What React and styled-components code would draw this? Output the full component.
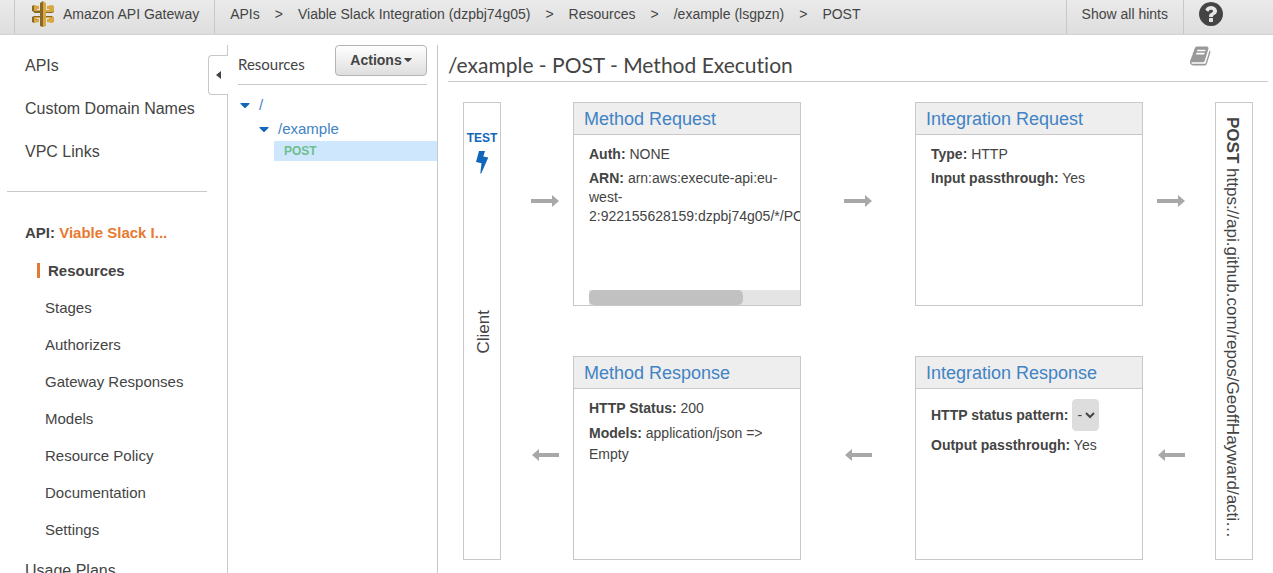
import React from 'react';
import styled, { createGlobalStyle } from 'styled-components';

const GlobalStyle = createGlobalStyle`
  * {
    box-sizing: border-box;
  }
  body {
    margin: 0;
    background: #fff;
    color: #444;
    font-family: 'Liberation Sans', Arial, sans-serif;
    font-size: 14px;
    line-height: 20px;
  }
  a {
    color: inherit;
    text-decoration: none;
  }
  h1, h2, ul, p {
    margin: 0;
    padding: 0;
  }
  ul {
    list-style: none;
  }
`;

const PageStyles = styled.div`
  height: 100vh;
  overflow: hidden;
  display: flex;
  flex-direction: column;
`;

const HeaderStyles = styled.header`
  flex: none;
  display: flex;
  height: 35px;
  padding-left: 14px;
  background: linear-gradient(#eaeaea, #dedede);
  border-bottom: 1px solid #d2d2d2;
`;

const HeaderCell = styled.div`
  display: flex;
  align-items: center;
  gap: ${({ $gap }) => $gap || 0}px;
  padding: 0 15px 6px;
  border-left: 1px solid #c8c8c8;
  flex: ${({ $grow }) => ($grow ? 1 : 'none')};
`;

const Brand = styled.a`
  display: flex;
  align-items: center;
  gap: 8px;
`;

const PlainButton = styled.button`
  display: flex;
  align-items: center;
  padding: 0;
  border: 0;
  background: none;
  color: ${({ $color }) => $color || '#444'};
  font: inherit;
  cursor: pointer;
`;

const HelpCell = styled(HeaderCell)`
  width: 90px;
  padding-left: 13px;
`;

const BodyStyles = styled.div`
  flex: 1;
  min-height: 0;
  display: flex;
  padding-top: 10px;
`;

const SidebarStyles = styled.nav`
  position: relative;
  flex: none;
  width: 228px;
  border-right: 1px solid #c8c8c8;
  padding: 11px 20px 0 7px;
`;

const MainLinks = styled.ul`
  display: flex;
  flex-direction: column;
  gap: 23px;
  padding: 0 0 29px 18px;
  border-bottom: 1px solid #c8c8c8;
  font-size: 16px;
`;

const ApiName = styled.p`
  padding: 31px 0 17px 18px;
  font-size: 15px;
  font-weight: bold;
  a {
    color: #e77a30;
  }
`;

const SubLinks = styled.ul`
  display: flex;
  flex-direction: column;
  gap: 17px;
  padding-left: 30px;
  font-size: 15px;
`;

const SubLink = styled.a`
  display: block;
  margin: 3px 0 2px;
  line-height: 15px;
  border-left: 3px solid ${({ $active }) => ($active ? '#e07b35' : 'transparent')};
  padding-left: ${({ $active }) => ($active ? 8 : 5)}px;
  font-weight: ${({ $active }) => ($active ? 'bold' : 'normal')};
`;

const PlansLink = styled.a`
  display: block;
  padding: 22px 0 0 18px;
  font-size: 16px;
`;

const CollapseButton = styled.button`
  position: absolute;
  top: 10px;
  right: -1px;
  width: 20px;
  height: 40px;
  padding: 0;
  display: flex;
  align-items: center;
  justify-content: center;
  background: #fff;
  border: 1px solid #c8c8c8;
  border-right: 0;
  border-radius: 4px 0 0 4px;
  color: #444;
`;

const ResourcesStyles = styled.section`
  flex: none;
  width: 210px;
  padding-left: 10px;
  border-right: 1px solid #c8c8c8;
`;

const ResourcesHead = styled.div`
  display: flex;
  justify-content: space-between;
  align-items: flex-start;
  height: 40px;
  margin-right: 10px;
  border-bottom: 1px solid #c8c8c8;
  h2 {
    padding-top: 9px;
    font-family: Lato, sans-serif;
    font-size: 15px;
    font-weight: normal;
  }
`;

const ActionsButton = styled.button`
  display: flex;
  align-items: center;
  justify-content: center;
  gap: 2px;
  width: 92px;
  height: 31px;
  padding: 0 0 2px;
  background: linear-gradient(#fff, #dedede);
  border: 1px solid #b4b4b4;
  border-radius: 4px;
  color: #444;
  font: bold 14px 'Liberation Sans', Arial, sans-serif;
`;

const Tree = styled.ul`
  padding-top: 8px;
  font-size: 15px;
`;

const TreeRow = styled.a`
  display: flex;
  align-items: center;
  gap: 9px;
  height: 24px;
  padding-left: ${({ $depth }) => $depth * 19 + 2}px;
  color: #4183c4;
`;

const MethodRow = styled.a`
  display: block;
  margin-left: 36px;
  padding-left: 10px;
  background: #cfe7fd;
  color: #6cc08b;
  font-size: 12px;
  font-weight: bold;
`;

const MainStyles = styled.main`
  flex: 1;
  min-width: 0;
  padding: 0 5px 0 10px;
`;

const TitleBar = styled.div`
  display: flex;
  justify-content: space-between;
  align-items: flex-start;
  height: 37px;
  padding-right: 56px;
  border-bottom: 1px solid #c8c8c8;
  h1 {
    padding-top: 7px;
    font-family: Lato, sans-serif;
    font-size: 21px;
    line-height: 26px;
    font-weight: normal;
    font-variant-ligatures: none;
  }
`;

const Flow = styled.div`
  display: grid;
  grid-template-columns: 38px 72px 2fr 1fr 2fr 72px 38px;
  grid-template-rows: 204px 204px;
  row-gap: 50px;
  padding: 20px 15px 0;
`;

const EndBox = styled.div`
  grid-row: 1 / span 2;
  grid-column: ${({ $column }) => $column};
  display: flex;
  flex-direction: column;
  align-items: center;
  border: 1px solid #c8c8c8;
  font-size: 17px;
`;

const TestLink = styled.a`
  display: flex;
  flex-direction: column;
  align-items: center;
  gap: 3px;
  padding-top: 25px;
  color: #1166bb;
  font-size: 12px;
  font-weight: bold;
`;

const ClientLabel = styled.span`
  margin-top: 136px;
  padding-right: 4px;
  writing-mode: vertical-rl;
  transform: rotate(180deg);
`;

const EndpointLabel = styled.span`
  padding-top: 14px;
  padding-right: 4px;
  writing-mode: vertical-rl;
  white-space: nowrap;
`;

const ArrowCell = styled.div`
  display: flex;
  align-items: center;
  justify-content: ${({ $align }) => $align || 'center'};
  grid-column: ${({ $column }) => $column};
  grid-row: ${({ $row }) => $row};
  padding: 0 14px 6px;
`;

const CardStyles = styled.section`
  grid-column: ${({ $column }) => $column};
  grid-row: ${({ $row }) => $row};
  min-width: 0;
  display: flex;
  flex-direction: column;
  border: 1px solid #c8c8c8;
  h2 {
    height: 32px;
    padding: 0 10px;
    background: #eee;
    border-bottom: 1px solid #c8c8c8;
    color: #4183c4;
    font-size: 18px;
    line-height: 33px;
    font-weight: normal;
  }
`;

const CardBody = styled.div`
  flex: 1;
  display: flex;
  flex-direction: column;
  gap: 5px;
  padding: 10px 0 0 15px;
  overflow: hidden;
  line-height: 19px;
`;

const Models = styled.p`
  padding-right: 15px;
  line-height: 21px;
`;

const ScrollTrack = styled.div`
  flex: none;
  height: 15px;
  margin-top: auto;
  background: #e4e4e4;
`;

const ScrollThumb = styled.div`
  width: 73%;
  height: 15px;
  border-radius: 5px;
  background: #c1c1c1;
`;

const PatternRow = styled.p`
  display: flex;
  align-items: center;
  gap: 4px;
`;

const PatternSelect = styled.select`
  height: 32px;
  padding: 0;
  border: 1px solid #ddd;
  border-radius: 4px;
  background-color: #ddd;
  color: #444;
  font: inherit;
`;

function GatewayLogo() {
  return (
    <svg width='25' height='28' viewBox='-1 0 25 28' aria-hidden='true'>
      <path fill='#876929' d='M1 6l2-1v7l-2-1zM1 17l2-1v7l-2-1zM9 3l3-2v26l-3-1z' />
      <path fill='#d9a741' d='M12 1l3 2v23l-3 1zM3 5l5 1v3H6v1h3v2H3zM3 16h6v2H6v1h2v3l-5 1z' />
      <path fill='#d9a741' d='M16 6l5-1 2 1v5l-2 1h-6v-2h3V9h-2zM15 16h6l2 1v5l-2 1-5-1v-3h2v-1h-3z' />
      <path fill='#876929' d='M3 11h6v2H3zM3 16h6v1H3zM15 12h6l2-1v1l-2 1h-6zM15 16h6v1h-6z' />
    </svg>
  );
}

function HelpIcon() {
  return (
    <svg width='28' height='28' viewBox='0 0 1792 1792' fill='currentColor' aria-hidden='true'>
      <path d='M1024 1376v-192q0-14-9-23t-23-9h-192q-14 0-23 9t-9 23v192q0 14 9 23t23 9h192q14 0 23-9t9-23zm256-672q0-88-55.500-163t-138.500-116-170-41q-243 0-371 213-15 24 8 42l132 100q7 6 19 6 16 0 25-12 53-68 86-92 34-24 86-24 48 0 85.500 26t37.500 59q0 38-20 61t-68 45q-63 28-115.500 86.500t-52.500 125.500v36q0 14 9 23t23 9h192q14 0 23-9t9-23q0-19 21.500-49.500t54.500-49.500q32-18 49-28.500t46-35 44.500-48 28-60.500 12.500-81zm384 192q0 209-103 385.500t-279.500 279.500-385.500 103-385.500-103-279.500-279.500-103-385.500 103-385.500 279.500-279.500 385.500-103 385.500 103 279.500 279.500 103 385.500z' />
    </svg>
  );
}

function BookIcon() {
  return (
    <svg width='22' height='22' viewBox='0 0 1792 1792' fill='currentColor' aria-hidden='true'>
      <path d='M1639 478q40 57 18 129l-275 906q-19 64-76.500 107.500t-122.500 43.500h-923q-77 0-148.500-53.500t-99.500-131.500q-24-67-2-127 0-4 3-27t4-37q1-8-3-21.500t-3-19.500q2-11 8-21t16.500-23.500 16.500-23.500q23-38 45-91.500t30-91.500q3-10 .5-30t-.5-28q3-11 17-28t17-23q21-36 42-92t25-90q1-9-2.500-32t.5-28q4-13 22-30.500t22-22.500q19-26 42.500-84.500t27.500-96.500q1-8-3-25.500t-2-26.500q2-8 9-18t18-23 17-21q8-12 16.500-30.500t15-35 16-36 19.500-32 26.500-23.500 36-11.500 47.500 5.500l-1 3q38-9 51-9h761q74 0 114 56t18 130l-274 906q-36 119-71.500 153.500t-128.500 34.500h-869q-27 0-38 15-11 16-1 43 24 70 144 70h923q29 0 56-15.500t35-41.500l300-987q7-22 5-57 38 15 59 43zm-1064 2q-4 13 2 22.500t20 9.500h608q13 0 25.500-9.500t16.500-22.500l21-64q4-13-2-22.500t-20-9.500h-608q-13 0-25.500 9.500t-16.500 22.500zm-83 256q-4 13 2 22.500t20 9.500h608q13 0 25.500-9.500t16.500-22.500l21-64q4-13-2-22.500t-20-9.500h-608q-13 0-25.500 9.500t-16.500 22.500z' />
    </svg>
  );
}

function Caret({ size = 10, color = 'currentColor' }) {
  return (
    <svg width={size} height={size / 2} viewBox='0 0 10 5' aria-hidden='true'>
      <path fill={color} d='M1 0h8q1 0 .6.800L5.600 4.700q-.6.500-1.200 0L.4.800Q0 0 1 0z' />
    </svg>
  );
}

function Bolt() {
  return (
    <svg width='14' height='23' viewBox='0 0 14 23' aria-hidden='true'>
      <path fill='#1166bb' d='M4 0h6L8.300 5.600 13.300 6.400 6.200 22.500H5.300L6.500 12.300 1 11z' />
    </svg>
  );
}

function Arrow({ back }) {
  return (
    <svg width='28' height='12' viewBox='0 0 28 12' aria-hidden='true'>
      <path fill='#a8a8a8' d={back ? 'M28 4H8V0L1 6l7 6V8h20z' : 'M0 4h21V0l7 6-7 6V8H0z'} />
    </svg>
  );
}

function Card({ title, column, row, children }) {
  return (
    <CardStyles $column={column} $row={row}>
      <h2><a href='#'>{title}</a></h2>
      <CardBody>{children}</CardBody>
    </CardStyles>
  );
}

const crumbs = ['APIs', 'Viable Slack Integration (dzpbj74g05)', 'Resources', '/example (lsgpzn)', 'POST'];
const mainLinks = ['APIs', 'Custom Domain Names', 'VPC Links'];
const subLinks = [
  'Resources',
  'Stages',
  'Authorizers',
  'Gateway Responses',
  'Models',
  'Resource Policy',
  'Documentation',
  'Settings',
];

function Header() {
  return (
    <HeaderStyles>
      <HeaderCell>
        <Brand href='#'>
          <GatewayLogo />
          <span>Amazon API Gateway</span>
        </Brand>
      </HeaderCell>
      <HeaderCell $grow $gap={15}>
        {crumbs.map((crumb, i) => (
          <React.Fragment key={crumb}>
            {i > 0 && <span>&gt;</span>}
            <a href='#'>{crumb}</a>
          </React.Fragment>
        ))}
      </HeaderCell>
      <HeaderCell>
        <PlainButton>Show all hints</PlainButton>
      </HeaderCell>
      <HelpCell>
        <PlainButton aria-label='Help'><HelpIcon /></PlainButton>
      </HelpCell>
    </HeaderStyles>
  );
}

function Sidebar() {
  return (
    <SidebarStyles>
      <MainLinks>
        {mainLinks.map((link) => (
          <li key={link}><a href='#'>{link}</a></li>
        ))}
      </MainLinks>
      <ApiName>API: <a href='#'>Viable Slack I...</a></ApiName>
      <SubLinks>
        {subLinks.map((link, i) => (
          <li key={link}><SubLink href='#' $active={i === 0}>{link}</SubLink></li>
        ))}
      </SubLinks>
      <PlansLink href='#'>Usage Plans</PlansLink>
      <CollapseButton aria-label='Collapse'>
        <svg width='5' height='8' viewBox='0 0 5 8' aria-hidden='true'>
          <path fill='currentColor' d='M5 0v8L0 4z' />
        </svg>
      </CollapseButton>
    </SidebarStyles>
  );
}

function Resources() {
  return (
    <ResourcesStyles>
      <ResourcesHead>
        <h2>Resources</h2>
        <ActionsButton>Actions <Caret size={8} /></ActionsButton>
      </ResourcesHead>
      <Tree>
        <li><TreeRow href='#' $depth={0}><Caret color='#1166bb' />/</TreeRow></li>
        <li><TreeRow href='#' $depth={1}><Caret color='#1166bb' />/example</TreeRow></li>
        <li><MethodRow href='#'>POST</MethodRow></li>
      </Tree>
    </ResourcesStyles>
  );
}

function MethodExecution() {
  return (
    <MainStyles>
      <TitleBar>
        <h1>/example - POST - Method Execution</h1>
        <PlainButton aria-label='Documentation' $color='#999'><BookIcon /></PlainButton>
      </TitleBar>
      <Flow>
        <EndBox $column={1}>
          <TestLink href='#'>TEST<Bolt /></TestLink>
          <ClientLabel>Client</ClientLabel>
        </EndBox>
        <ArrowCell $column={2} $row={1} $align='flex-end'><Arrow /></ArrowCell>
        <ArrowCell $column={2} $row={2} $align='flex-end'><Arrow back /></ArrowCell>
        <Card title='Method Request' column={3} row={1}>
          <p><b>Auth:</b> NONE</p>
          <p><b>ARN:</b> arn:aws:execute-api:eu-west-2:922155628159:dzpbj74g05/*/POST/example</p>
          <ScrollTrack><ScrollThumb /></ScrollTrack>
        </Card>
        <Card title='Method Response' column={3} row={2}>
          <p><b>HTTP Status:</b> 200</p>
          <Models><b>Models:</b> application/json =&gt; Empty</Models>
        </Card>
        <ArrowCell $column={4} $row={1}><Arrow /></ArrowCell>
        <ArrowCell $column={4} $row={2}><Arrow back /></ArrowCell>
        <Card title='Integration Request' column={5} row={1}>
          <p><b>Type:</b> HTTP</p>
          <p><b>Input passthrough:</b> Yes</p>
        </Card>
        <Card title='Integration Response' column={5} row={2}>
          <PatternRow>
            <b><label htmlFor='pattern'>HTTP status pattern:</label></b>
            <PatternSelect id='pattern'>
              <option>-</option>
            </PatternSelect>
          </PatternRow>
          <p><b>Output passthrough:</b> Yes</p>
        </Card>
        <ArrowCell $column={6} $row={1} $align='flex-start'><Arrow /></ArrowCell>
        <ArrowCell $column={6} $row={2} $align='flex-start'><Arrow back /></ArrowCell>
        <EndBox $column={7}>
          <EndpointLabel><b>POST</b> https://api.github.com/repos/GeoffHayward/acti…</EndpointLabel>
        </EndBox>
      </Flow>
    </MainStyles>
  );
}

export default function App() {
  return (
    <PageStyles>
      <GlobalStyle />
      <Header />
      <BodyStyles>
        <Sidebar />
        <Resources />
        <MethodExecution />
      </BodyStyles>
    </PageStyles>
  );
}
